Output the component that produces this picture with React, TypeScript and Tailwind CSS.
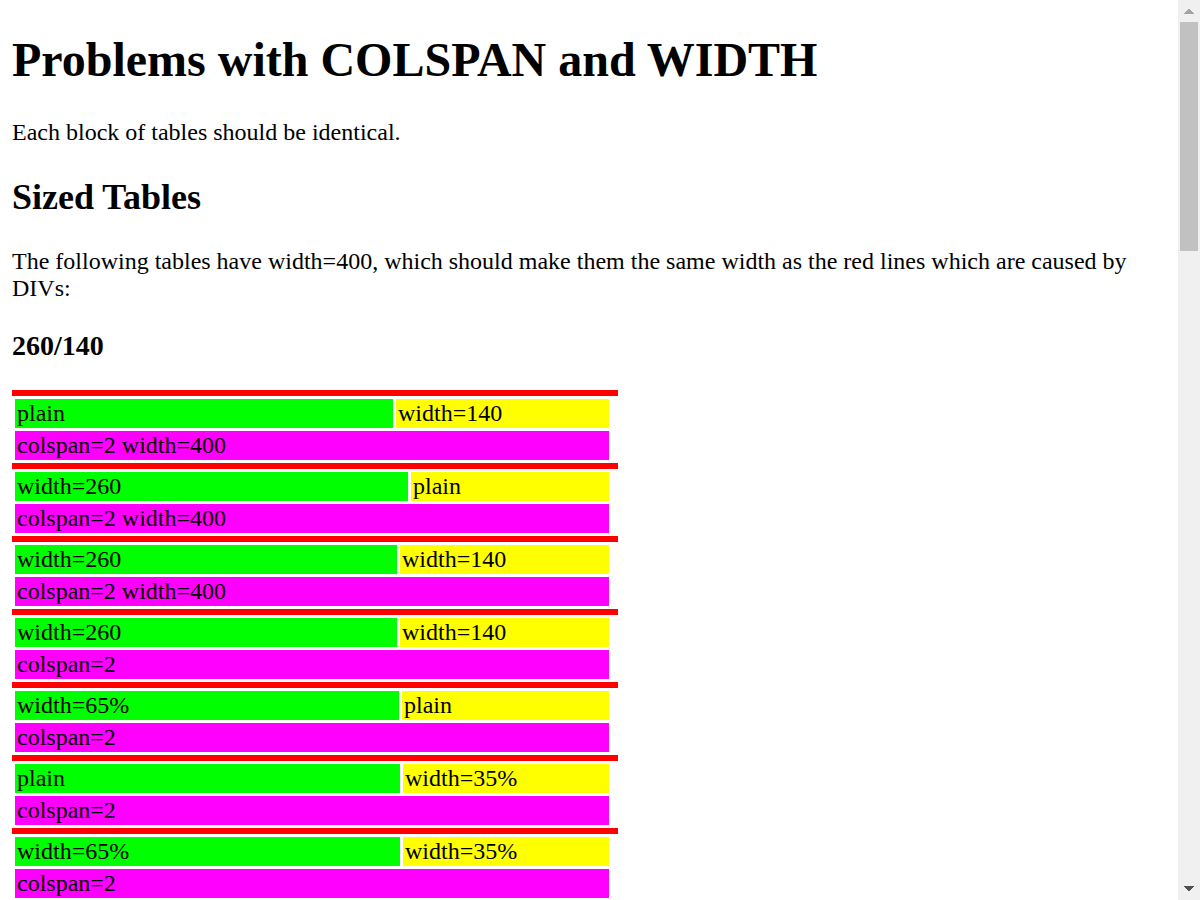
type Sample = {
  first: string;
  second: string;
  span: string;
  firstWidth: number;
};

const samples: Sample[] = [
  { first: "plain", second: "width=140", span: "colspan=2 width=400", firstWidth: 378 },
  { first: "width=260", second: "plain", span: "colspan=2 width=400", firstWidth: 393 },
  { first: "width=260", second: "width=140", span: "colspan=2 width=400", firstWidth: 382 },
  { first: "width=260", second: "width=140", span: "colspan=2", firstWidth: 382 },
  { first: "width=65%", second: "plain", span: "colspan=2", firstWidth: 384 },
  { first: "plain", second: "width=35%", span: "colspan=2", firstWidth: 385 },
  { first: "width=65%", second: "width=35%", span: "colspan=2", firstWidth: 385 },
];

function SampleTable({ first, second, span, firstWidth }: Sample) {
  return (
    <>
      <div className="h-[6px] w-[606px] bg-[#ff0000]" />
      <table className="w-[600px] table-fixed border-separate border-spacing-[3px]">
        <colgroup>
          <col style={{ width: firstWidth }} />
          <col />
        </colgroup>
        <tbody>
          <tr>
            <td className="bg-[#00ff00] px-[2px] py-px">{first}</td>
            <td className="bg-[#ffff00] px-[2px] py-px">{second}</td>
          </tr>
          <tr>
            <td colSpan={2} className="bg-[#ff00ff] px-[2px] py-px">
              {span}
            </td>
          </tr>
        </tbody>
      </table>
    </>
  );
}

function Scrollbar() {
  return (
    <div aria-hidden="true" className="flex w-[22px] shrink-0 flex-col items-center bg-[#f0f0f0]">
      <svg className="h-[22px] w-[22px] shrink-0" viewBox="0 0 22 22" shapeRendering="crispEdges">
        <path d="M10 9h2v1h1v1h1v1h1v1h1v1H6v-1h1v-1h1v-1h1v-1h1z" fill="#a3a3a3" />
      </svg>
      <div className="flex w-[18px] grow flex-col">
        <div className="h-[229px] bg-[#c1c1c1]" />
      </div>
      <svg className="h-[22px] w-[22px] shrink-0" viewBox="0 0 22 22" shapeRendering="crispEdges">
        <path d="M6 8h10v1h-1v1h-1v1h-1v1h-1v1h-2v-1H9v-1H8v-1H7V9H6z" fill="#505050" />
      </svg>
    </div>
  );
}

export default function App() {
  return (
    <div className="flex h-screen overflow-hidden bg-white font-['Liberation_Serif',serif] text-[24px] leading-[27px] text-black">
      <main className="min-w-0 grow overflow-hidden px-3 pt-8">
        <h1 className="mb-8 text-[48px] leading-[55px] font-bold">
          Problems with COLSPAN and WIDTH
        </h1>
        <p className="mb-[30px]">Each block of tables should be identical.</p>
        <h2 className="mb-[30px] text-[36px] leading-[42px] font-bold">Sized Tables</h2>
        <p className="mb-7">
          The following tables have width=400, which should make them the same width as the red
          lines which are caused by DIVs:
        </p>
        <h3 className="mb-7 text-[28px] leading-[32px] font-bold">260/140</h3>
        {samples.map((sample, index) => (
          <SampleTable key={index} {...sample} />
        ))}
      </main>
      <Scrollbar />
    </div>
  );
}
